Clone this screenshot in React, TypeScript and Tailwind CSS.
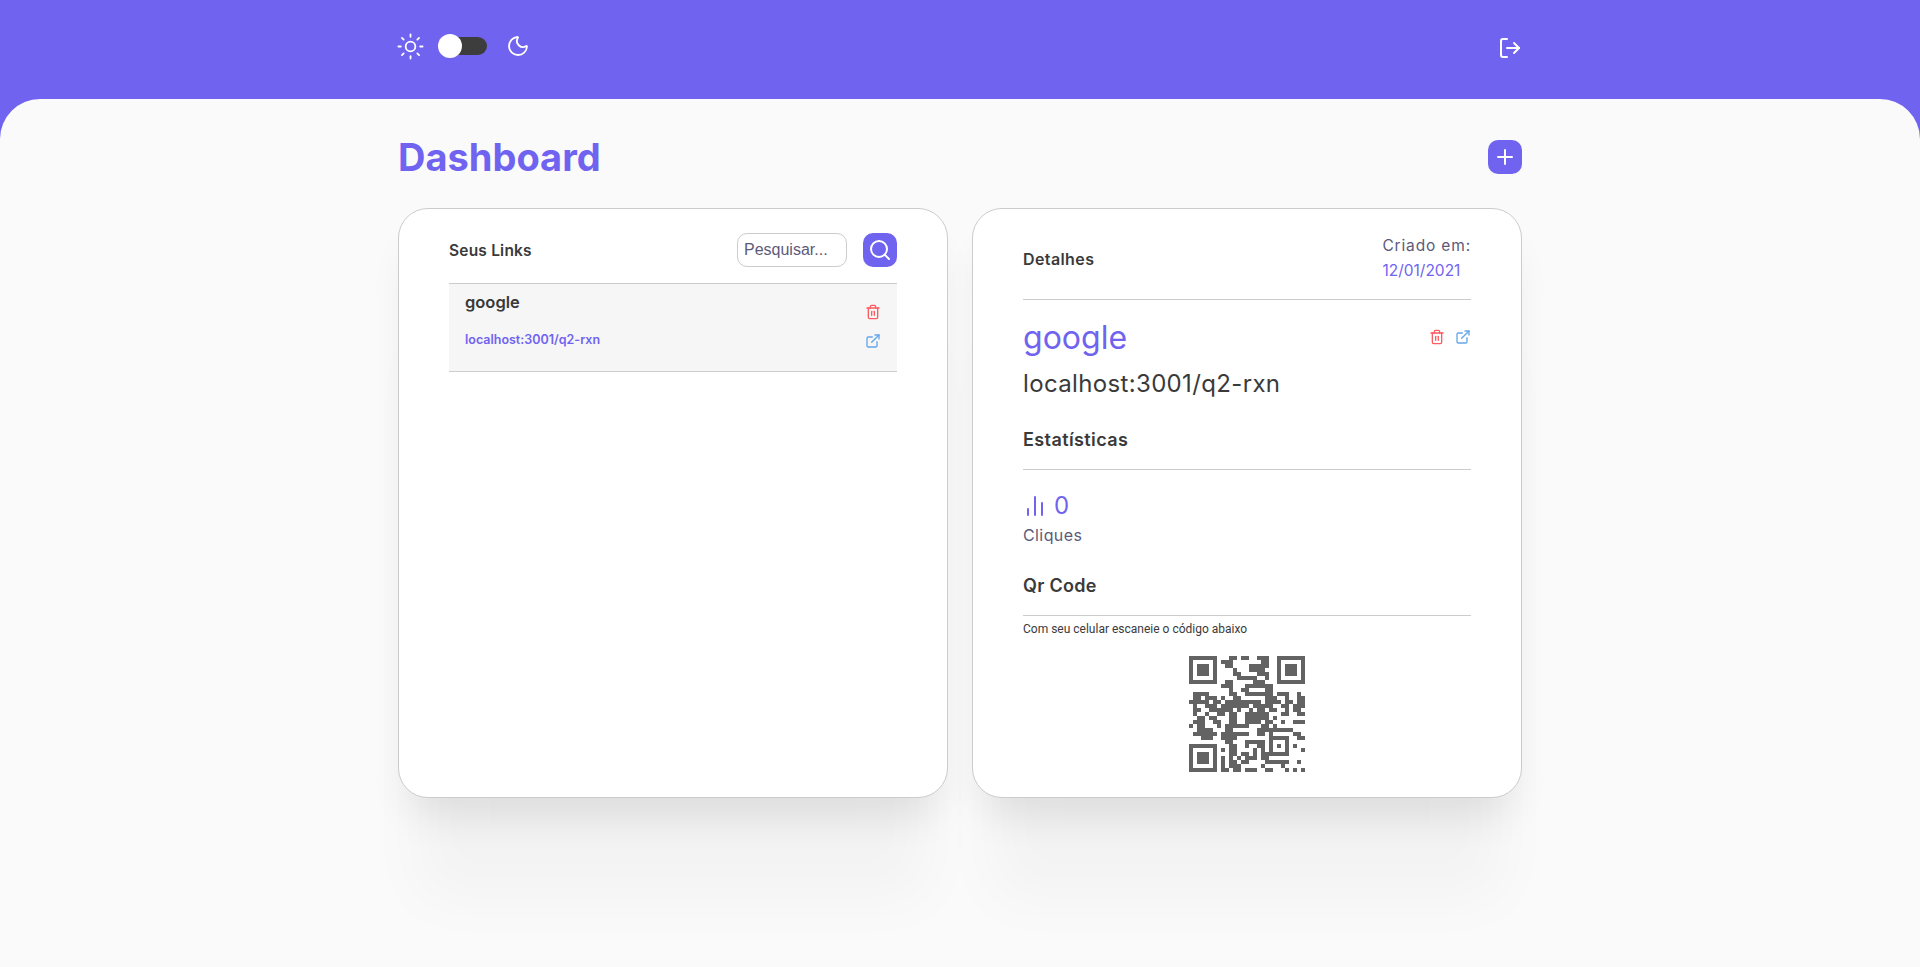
import React from "react";
import {
  ChartNoAxesColumn,
  ExternalLink,
  LogOut,
  Moon,
  Plus,
  Search,
  Sun,
  Trash2,
} from "lucide-react";

// dark columns of each qr row, finder squares are drawn apart
const qrCells: number[][] = [
  [10, 11, 13, 14, 17, 18, 19],
  [8, 9, 10, 18, 19],
  [9, 10, 15, 16, 17, 18, 19],
  [11, 15, 16, 17, 18],
  [11, 12, 17, 18, 19],
  [12, 13, 14, 15, 16, 19],
  [9, 10, 16, 17, 18],
  [8, 9, 10, 14, 15, 16, 17, 18, 19, 20],
  [10, 13, 14, 19, 20],
  [1, 2, 3, 4, 10, 11, 14, 15, 16, 17, 18, 19, 20, 22, 23, 24, 27],
  [1, 2, 4, 5, 6, 8, 11, 12, 19, 20, 21, 24, 27, 28],
  [0, 1, 2, 3, 4, 6, 7, 9, 10, 11, 12, 13, 14, 15, 16, 17, 19, 20, 21, 22, 24, 25, 27, 28],
  [1, 4, 5, 6, 8, 9, 10, 11, 12, 13, 14, 16, 17, 18, 19, 20, 23, 24, 26, 27, 28],
  [1, 2, 5, 6, 7, 8, 9, 10, 12, 15, 17, 18, 20, 21, 24, 26, 27],
  [1, 4, 7, 8, 10, 11, 14, 15, 16, 17, 18, 19, 23, 24, 27, 28],
  [2, 3, 5, 6, 10, 11, 14, 15, 16, 17, 18, 19, 21],
  [1, 2, 3, 6, 7, 10, 11, 14, 15, 16, 17, 19, 20, 23, 26, 27, 28],
  [0, 2, 3, 7, 9, 10, 11, 12, 13, 14, 18, 19, 21],
  [2, 3, 4, 5, 9, 10, 17, 18, 19, 20, 21, 22, 23, 24, 25],
  [1, 2, 3, 4, 5, 6, 8, 9, 10, 11, 12, 13, 14, 17, 18, 20, 26, 27],
  [3, 4, 5, 8, 9, 10, 11, 20, 21, 22, 23, 24, 27, 28],
  [9, 10, 14, 15, 16, 17, 18, 20, 24],
  [10, 11, 14, 17, 18, 20, 22, 24, 26],
  [8, 10, 11, 16, 18, 20, 24, 28],
  [10, 11, 13, 14, 16, 18, 19, 20, 21, 22, 23, 24],
  [8, 10, 12, 14, 15, 16, 18, 19],
  [8, 10, 11, 13, 14, 19, 20, 21, 22, 23, 24, 27],
  [8, 10, 11, 12, 18, 23],
  [8, 9, 11, 12, 14, 15, 16, 19, 20, 24, 26, 28],
];

const QrFinder = ({ x, y }: { x: number; y: number }) => (
  <>
    <rect x={x + 0.5} y={y + 0.5} width="6" height="6" fill="none" stroke="#636363" strokeWidth="1" />
    <rect x={x + 2} y={y + 2} width="3" height="3" fill="#636363" />
  </>
);

const QrCode = () => (
  <svg
    width="116"
    height="116"
    viewBox="0 0 29 29"
    shapeRendering="crispEdges"
    className="mx-auto mt-[19px]"
  >
    <QrFinder x={0} y={0} />
    <QrFinder x={22} y={0} />
    <QrFinder x={0} y={22} />
    {qrCells.map((row, y) =>
      row.map((x) => <rect key={`${x}-${y}`} x={x} y={y} width="1" height="1" fill="#636363" />),
    )}
  </svg>
);

const App = () => {
  return (
    <div className="min-h-screen overflow-hidden bg-[#7063f0] font-['Inter',sans-serif] text-[#3a3a3a]">
      <header className="mx-auto flex h-[99px] w-[1124px] justify-between pt-[34px]">
        <div className="flex h-6 items-center">
          <Sun size={29} strokeWidth={1.5} className="-ml-[2px] text-white" />
          <div className="ml-[13px] flex w-[49px] items-center">
            <div className="z-10 h-6 w-6 rounded-full bg-white" />
            <div className="-ml-3 h-[18px] w-[37px] rounded-full bg-[#3d3d3d]" />
          </div>
          <Moon size={24} strokeWidth={1.8} className="ml-[19px] text-white" />
        </div>
        <LogOut size={24} strokeWidth={2} className="mt-[2px] text-white" />
      </header>

      <main className="min-h-[868px] rounded-t-[40px] bg-[#fafafa] pt-[41px]">
        <div className="mx-auto w-[1124px]">
          <div className="flex h-[34px] items-center justify-between">
            <h1 className="text-[38px] font-bold text-[#7063f0]">Dashboard</h1>
            <button className="flex h-[34px] w-[34px] items-center justify-center rounded-[10px] bg-[#7063f0] text-white">
              <Plus size={24} strokeWidth={2} />
            </button>
          </div>

          <div className="mt-[34px] grid grid-cols-2 gap-6">
            <section className="h-[590px] rounded-[30px] border border-[#cccccc] bg-white px-[50px] pt-6 shadow-[0_30px_40px_-12px_rgba(0,0,0,0.09),0_120px_60px_-20px_rgba(0,0,0,0.03)]">
              <div className="flex h-[34px] items-center">
                <h2 className="flex-1 pt-[2px] text-[15.5px] font-semibold tracking-[0.2px]">Seus Links</h2>
                <div className="flex h-[34px] w-[110px] items-center rounded-[10px] border border-[#cccccc] pl-[6px] font-['Liberation_Sans',sans-serif] text-[16px] text-[#5c5a7a]">
                  Pesquisar...
                </div>
                <button className="ml-4 flex h-[34px] w-[34px] items-center justify-center rounded-[10px] bg-[#7063f0] text-white">
                  <Search size={24} strokeWidth={2} />
                </button>
              </div>

              <div className="mt-4 flex h-[89px] justify-between border-y border-[#cccccc] bg-[#f6f6f6] px-4">
                <div className="pt-[6px]">
                  <div className="text-[16.5px] leading-6 font-semibold">google</div>
                  <div className="mt-4 text-[12.5px] leading-5 font-semibold text-[#7063f0]">
                    localhost:3001/q2-rxn
                  </div>
                </div>
                <div className="flex flex-col gap-[13px] pt-[20px]">
                  <Trash2 size={16} strokeWidth={2} className="text-[#ff5a5f]" />
                  <ExternalLink size={16} strokeWidth={2} className="text-[#64a6e8]" />
                </div>
              </div>
            </section>

            <section className="h-[590px] rounded-[30px] border border-[#cccccc] bg-white px-[50px] pt-6 shadow-[0_30px_40px_-12px_rgba(0,0,0,0.09),0_120px_60px_-20px_rgba(0,0,0,0.03)]">
              <div className="flex items-center justify-between border-b border-[#cccccc] pb-4">
                <h2 className="pt-[2px] text-[16px] font-semibold tracking-[0.4px]">Detalhes</h2>
                <div className="text-[15.5px] leading-[25px]">
                  <div className="tracking-[0.85px] text-[#5c5a7a]">Criado em:</div>
                  <div className="text-[#7063f0]">12/01/2021</div>
                </div>
              </div>

              <div className="flex justify-between pt-[14px]">
                <div className="text-[32px] leading-[48px] text-[#7063f0]">google</div>
                <div className="flex gap-[10px] pt-[15px]">
                  <Trash2 size={16} strokeWidth={2} className="text-[#ff5a5f]" />
                  <ExternalLink size={16} strokeWidth={2} className="text-[#64a6e8]" />
                </div>
              </div>
              <div className="mt-1 text-[24px] leading-9 tracking-[0.35px]">localhost:3001/q2-rxn</div>

              <h3 className="mt-6 border-b border-[#cccccc] pb-[15px] text-[18px] leading-7 font-semibold tracking-[0.4px]">
                Estatísticas
              </h3>
              <div className="mt-[17px] flex h-9 items-center pt-[2px] text-[24px] text-[#7063f0]">
                <ChartNoAxesColumn size={24} strokeWidth={2} className="-mt-[1px]" />
                <span className="ml-[7px]">0</span>
              </div>
              <div className="text-[16px] leading-6 tracking-[0.4px] text-[#5c5a7a]">Cliques</div>

              <h3 className="mt-[25px] border-b border-[#cccccc] pb-[15px] text-[18px] leading-7 font-semibold tracking-[0.3px]">
                Qr Code
              </h3>
              <p className="mt-[5px] font-['Roboto',sans-serif] text-[12px] leading-4">
                Com seu celular escaneie o código abaixo
              </p>
              <QrCode />
            </section>
          </div>
        </div>
      </main>
    </div>
  );
};

export default App;
